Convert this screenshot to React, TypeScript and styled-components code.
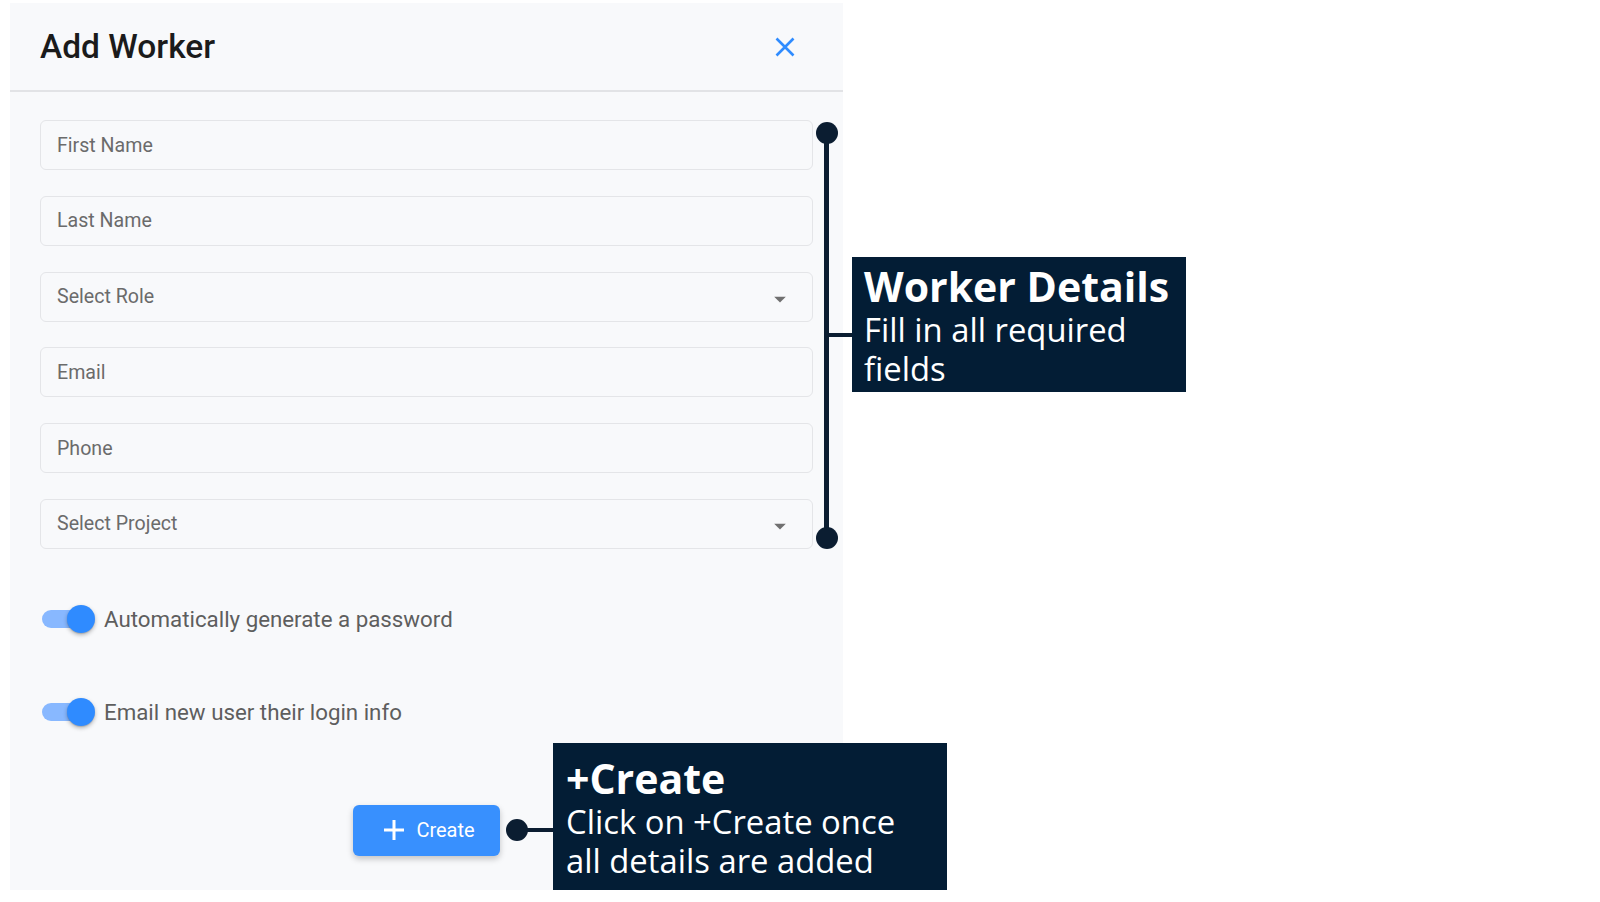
import React from "react";
import styled, { createGlobalStyle } from "styled-components";

const GlobalStyle = createGlobalStyle`
  html, body {
    margin: 0;
    padding: 0;
    background: #ffffff;
  }
  body {
    font-family: Roboto, "Liberation Sans", Arial, sans-serif;
  }
  * { box-sizing: border-box; }
`;

const Page = styled.div`
  position: relative;
  width: 1600px;
  height: 902px;
  padding: 3px 0 0 10px;
  overflow: hidden;
`;

const Panel = styled.div`
  width: 833px;
  height: 887px;
  background: #f8f9fb;
  display: flex;
  flex-direction: column;
`;

const Header = styled.div`
  height: 89px;
  display: flex;
  align-items: center;
  justify-content: space-between;
  padding: 0 48px 0 30px;
  border-bottom: 2px solid #e2e3e6;
`;

const Title = styled.h1`
  margin: 0;
  font-family: Roboto, "Liberation Sans", sans-serif;
  font-weight: 500;
  font-size: 33.5px;
  color: #1b1b1b;
`;

const CloseButton = styled.button`
  border: 0;
  background: transparent;
  padding: 0;
  width: 20px;
  height: 20px;
  display: flex;
  align-items: center;
  justify-content: center;
  cursor: pointer;
`;

const Form = styled.div`
  display: flex;
  flex-direction: column;
  gap: 25.8px;
  padding: 28px 30px 0 30px;
`;

const Input = styled.input`
  height: 50px;
  width: 100%;
  border: 1.5px solid #e4e5e8;
  border-radius: 6px;
  background: #f8f9fb;
  padding: 0 16px;
  font-family: Roboto, "Liberation Sans", sans-serif;
  font-size: 19.6px;
  color: #333;
  outline: none;
  &::placeholder {
    color: #6b6b6b;
    opacity: 1;
  }
`;

const Select = styled.div`
  height: 50px;
  width: 100%;
  border: 1.5px solid #e4e5e8;
  border-radius: 6px;
  background: #f8f9fb;
  padding: 0 18px 0 16px;
  display: flex;
  align-items: center;
  justify-content: space-between;
  font-family: Roboto, "Liberation Sans", sans-serif;
  font-size: 19.6px;
  color: #6b6b6b;
  cursor: pointer;
`;

const Caret = styled.svg`
  width: 28px;
  height: 28px;
  margin-top: 5px;
  fill: #707070;
`;

const Toggles = styled.div`
  display: flex;
  flex-direction: column;
  gap: 53px;
  padding: 50px 30px 0 32px;
`;

const ToggleRow = styled.label`
  height: 40px;
  display: flex;
  align-items: center;
  gap: 9px;
  font-family: Roboto, "Liberation Sans", sans-serif;
  font-size: 22.3px;
  color: #5e5e5e;
  cursor: pointer;
`;

const Switch = styled.span<{ $on: boolean }>`
  position: relative;
  width: 53px;
  height: 28px;
  display: flex;
  align-items: center;
  flex: none;
  &::before {
    content: "";
    width: 48px;
    height: 18px;
    border-radius: 9px;
    background: ${(p) => (p.$on ? "#88b8ff" : "#c8c8c8")};
  }
  &::after {
    content: "";
    position: absolute;
    top: 0;
    left: ${(p) => (p.$on ? "25px" : "0")};
    width: 28px;
    height: 28px;
    border-radius: 50%;
    background: ${(p) => (p.$on ? "#2f8bff" : "#fafafa")};
    box-shadow: 0 2px 4px rgba(0, 0, 0, 0.28), 0 1px 1px rgba(0, 0, 0, 0.12);
  }
`;

const Footer = styled.div`
  display: flex;
  justify-content: center;
  padding-top: 73px;
`;

const CreateButton = styled.button`
  width: 147px;
  height: 51px;
  border: 0;
  border-radius: 6px;
  background: #3890fe;
  color: #ffffff;
  display: flex;
  align-items: center;
  justify-content: center;
  gap: 12px;
  font-family: Roboto, "Liberation Sans", sans-serif;
  font-size: 20px;
  font-weight: 400;
  box-shadow: 0 3px 6px rgba(0, 0, 0, 0.22);
  cursor: pointer;
  padding: 0 0 0 6px;
`;

/* ---------- Annotations (overlay) ---------- */

const Bracket = styled.div`
  position: absolute;
  left: 815.5px;
  top: 122px;
  width: 22px;
  height: 427px;
  display: flex;
  flex-direction: column;
  align-items: center;
`;

const Dot = styled.span`
  width: 22px;
  height: 22px;
  border-radius: 50%;
  background: #0b1d31;
  flex: none;
`;

const BracketLine = styled.span`
  width: 5px;
  flex: 1;
  margin: -2px 0;
  background: #0b1d31;
`;

const HConnector = styled.span<{ $left: number; $top: number; $width: number }>`
  position: absolute;
  left: ${(p) => p.$left}px;
  top: ${(p) => p.$top}px;
  width: ${(p) => p.$width}px;
  height: 4px;
  background: #0b1d31;
`;

const FloatingDot = styled(Dot)<{ $left: number; $top: number }>`
  position: absolute;
  left: ${(p) => p.$left}px;
  top: ${(p) => p.$top}px;
`;

const Callout = styled.div<{ $left: number; $top: number; $width: number; $pad: string }>`
  position: absolute;
  left: ${(p) => p.$left}px;
  top: ${(p) => p.$top}px;
  width: ${(p) => p.$width}px;
  padding: ${(p) => p.$pad};
  background: #031d35;
  color: #ffffff;
  font-family: "Open Sans", "Noto Sans", sans-serif;
`;

const CalloutTitle = styled.div`
  font-weight: 700;
  font-size: 41px;
  line-height: 48px;
  white-space: nowrap;
`;

const CalloutLine = styled.div`
  font-weight: 400;
  font-size: 32.8px;
  line-height: 39px;
  white-space: nowrap;
`;

const textFields = ["First Name", "Last Name"];

function SelectBox({ label }: { label: string }) {
  return (
    <Select role="button">
      <span>{label}</span>
      <Caret viewBox="0 0 24 24">
        <path d="M7 10l5 5 5-5z" />
      </Caret>
    </Select>
  );
}

export default function App() {
  return (
    <>
      <GlobalStyle />
      <Page>
        <Panel>
          <Header>
            <Title>Add Worker</Title>
            <CloseButton aria-label="Close">
              <svg width="20" height="20" viewBox="0 0 20 20">
                <path
                  d="M1.5 1.5L18.5 18.5M18.5 1.5L1.5 18.5"
                  stroke="#2f8cff"
                  strokeWidth="2.6"
                  fill="none"
                />
              </svg>
            </CloseButton>
          </Header>
          <Form>
            {textFields.map((f) => (
              <Input key={f} placeholder={f} />
            ))}
            <SelectBox label="Select Role" />
            <Input placeholder="Email" />
            <Input placeholder="Phone" />
            <SelectBox label="Select Project" />
          </Form>
          <Toggles>
            <ToggleRow>
              <Switch $on={true} />
              Automatically generate a password
            </ToggleRow>
            <ToggleRow>
              <Switch $on={true} />
              Email new user their login info
            </ToggleRow>
          </Toggles>
          <Footer>
            <CreateButton>
              <svg width="20" height="20" viewBox="0 0 20 20">
                <path d="M10 0V20M0 10H20" stroke="#ffffff" strokeWidth="3" fill="none" />
              </svg>
              Create
            </CreateButton>
          </Footer>
        </Panel>

        <Bracket>
          <Dot />
          <BracketLine />
          <Dot />
        </Bracket>
        <HConnector $left={826} $top={333} $width={27} />
        <Callout $left={852} $top={257} $width={334} $pad="5px 12px 4px 12px">
          <CalloutTitle>Worker Details</CalloutTitle>
          <CalloutLine>Fill in all required</CalloutLine>
          <CalloutLine>fields</CalloutLine>
        </Callout>

        <FloatingDot $left={506} $top={819} />
        <HConnector $left={520} $top={828} $width={34} />
        <Callout $left={553} $top={743} $width={394} $pad="11px 13px 10px 13px">
          <CalloutTitle>+Create</CalloutTitle>
          <CalloutLine>Click on +Create once</CalloutLine>
          <CalloutLine>all details are added</CalloutLine>
        </Callout>
      </Page>
    </>
  );
}
